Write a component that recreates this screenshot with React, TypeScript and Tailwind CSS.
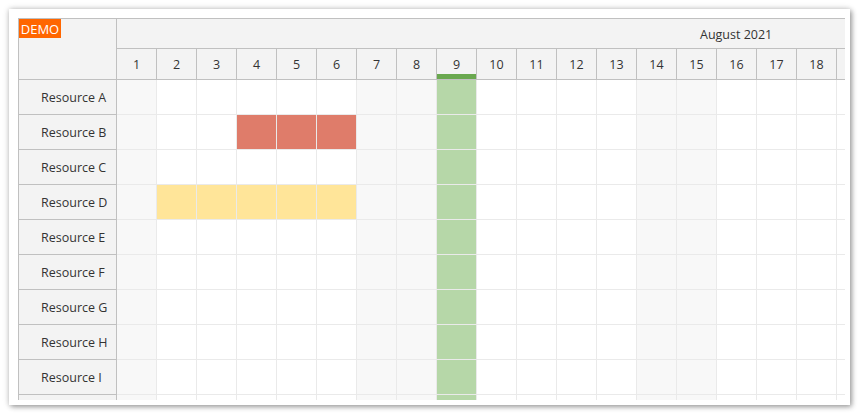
import React from 'react';

// days 1..18 are in view; the 19th column only peeks in at the right edge
const days = Array.from({ length: 19 }, (_, i) => i + 1);
const lastVisible = 18;
const weekend = new Set([1, 7, 8, 14, 15]);
const today = 9;
// the last row is only peeking in at the bottom edge, its label is out of view
const resources = ['A', 'B', 'C', 'D', 'E', 'F', 'G', 'H', 'I', ''];

// events painted per cell, like the reference (grid lines stay visible)
const events: Record<string, { from: number; to: number; color: 'red' | 'yellow' }> = {
  B: { from: 4, to: 6, color: 'red' },
  D: { from: 2, to: 6, color: 'yellow' },
};

function cellBg(res: string, day: number) {
  const ev = events[res];
  if (ev && day >= ev.from && day <= ev.to) {
    return ev.color === 'red' ? 'bg-[#df7c6a]' : 'bg-[#ffe599]';
  }
  if (day === today) return 'bg-[#b6d7a8]';
  if (weekend.has(day)) return 'bg-[#f8f8f8]';
  return 'bg-white';
}

export default function App() {
  return (
    <div className="min-h-screen bg-white p-[9px] font-['Open_Sans','Noto_Sans',sans-serif] text-[#333]">
      <div className="w-[841px] h-[396px] bg-white pl-[9px] pt-[9px] shadow-[0_0_6px_rgba(0,0,0,0.22),2px_2px_5px_rgba(0,0,0,0.3)]">
        <div className="w-[827px] h-[382px] border-l border-t border-[#c0c0c0] overflow-hidden flex">
          {/* Row headers */}
          <div className="w-[98px] shrink-0 flex flex-col">
            <div className="relative h-[61px] shrink-0 bg-[#f3f3f3] border-r border-b border-[#c0c0c0]">
              <span className="absolute left-0 top-0 h-[19px] w-[42px] bg-[#ff6600] text-white text-[13px] leading-[19px] pt-[1px] text-center">
                DEMO
              </span>
            </div>
            {resources.map((r, i) => (
              <div
                key={i}
                className="h-[35px] shrink-0 bg-[#f3f3f3] border-r border-b border-[#c0c0c0] flex items-center pl-[22px] pt-[3px] text-[12.5px]"
              >
                {r && `Resource ${r}`}
              </div>
            ))}
          </div>

          {/* Timeline */}
          <div className="flex-1 overflow-hidden">
            <div className="w-[760px] flex flex-col">
              {/* month spans all 31 days (1240px), so its label sits at 620px */}
              <div className="h-[30px] bg-[#f3f3f3] border-b border-[#c0c0c0] flex items-center pl-[583px] pt-[3px] text-[12.5px]">
                August 2021
              </div>
              <div className="h-[31px] flex bg-[#f3f3f3] border-b border-[#c0c0c0]">
                {days.map((d) => (
                  <div
                    key={d}
                    className="relative w-[40px] shrink-0 border-r border-[#c0c0c0] flex items-center justify-center pt-[3px] text-[12.5px]"
                  >
                    {d <= lastVisible ? d : ''}
                    {d === today && <span className="absolute left-0 right-0 bottom-0 h-[5px] bg-[#6aa84f]" />}
                  </div>
                ))}
              </div>
              {resources.map((r, i) => (
                <div key={i} className="h-[35px] flex">
                  {days.map((d) => (
                    <div
                      key={d}
                      className={`w-[40px] shrink-0 border-r border-b border-[#eaeaea] ${cellBg(r, d)}`}
                    />
                  ))}
                </div>
              ))}
            </div>
          </div>
        </div>
      </div>
    </div>
  );
}
